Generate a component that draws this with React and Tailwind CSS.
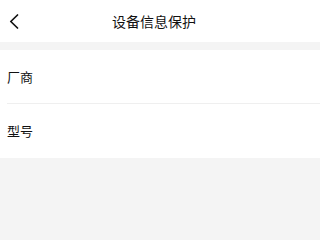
import React from 'react';

const rows = ['厂商', '型号'];

export default function App() {
  return (
    <div
      className="flex min-h-screen w-full flex-col bg-[#f4f4f4] text-[#111]"
      style={{ fontFamily: '"Noto Sans CJK SC", "Noto Sans", sans-serif' }}
    >
      <div className="flex h-[42px] items-center bg-white">
        <div className="flex w-[112px] items-center pl-[9px]">
          <svg width="10" height="15" viewBox="0 0 10 15" fill="none">
            <path d="M8.5 1 L1.8 7.5 L8.5 14" stroke="#111" strokeWidth="1.7" strokeLinecap="round" strokeLinejoin="round" />
          </svg>
        </div>
        <span className="text-[14px] leading-none">设备信息保护</span>
      </div>
      <div className="mt-[8px] bg-white pl-[7px]">
        {rows.map((label, i) => (
          <div
            key={label}
            className={`flex h-[54px] items-center text-[13px] ${i < rows.length - 1 ? 'border-b border-[#efefef]' : ''}`}
          >
            {label}
          </div>
        ))}
      </div>
    </div>
  );
}
